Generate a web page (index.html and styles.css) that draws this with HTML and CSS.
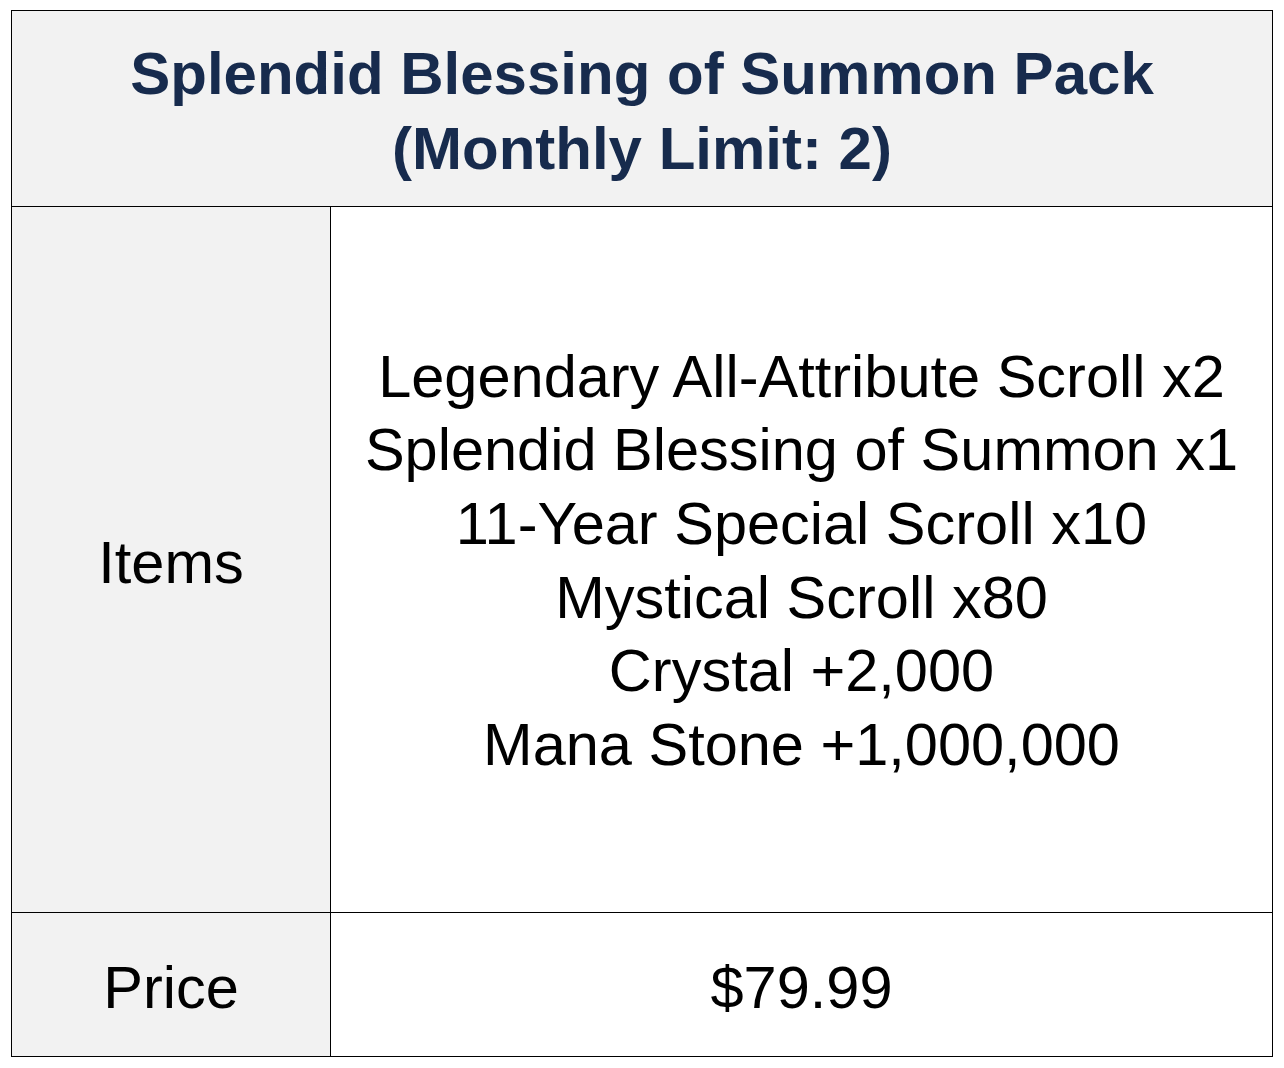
FILE: index.html
```html
<!DOCTYPE html>
<html>
<head>
<meta charset="utf-8">
<link rel="stylesheet" href="styles.css">
</head>
<body>
<div class="pack">
  <div class="pack-title">Splendid Blessing of Summon Pack<br>(Monthly Limit: 2)</div>
  <div class="row row-items">
    <div class="label">Items</div>
    <div class="value items-list">
      <div>Legendary All-Attribute Scroll x2</div>
      <div>Splendid Blessing of Summon x1</div>
      <div>11-Year Special Scroll x10</div>
      <div>Mystical Scroll x80</div>
      <div>Crystal +2,000</div>
      <div>Mana Stone +1,000,000</div>
    </div>
  </div>
  <div class="row row-price">
    <div class="label">Price</div>
    <div class="value">$79.99</div>
  </div>
</div>
</body>
</html>
```
FILE: styles.css
```css
html, body {
  margin: 0;
  padding: 0;
  background: #ffffff;
}
body {
  font-family: "Liberation Sans", Arial, sans-serif;
}
.pack {
  margin: 10px 0 0 11px;
  width: 1262px;
  box-sizing: border-box;
  border: 1px solid #000;
  display: flex;
  flex-direction: column;
}
.pack-title {
  height: 196px;
  box-sizing: border-box;
  padding-top: 4px;
  background: #f2f2f2;
  border-bottom: 1px solid #000;
  display: flex;
  align-items: center;
  justify-content: center;
  text-align: center;
  font-weight: bold;
  font-size: 60px;
  line-height: 75px;
  color: #172b4d;
}
.row {
  display: grid;
  grid-template-columns: 319px 1fr;
}
.row-items {
  height: 706px;
  border-bottom: 1px solid #000;
  box-sizing: border-box;
}
.row-price {
  height: 143px;
}
.label {
  background: #f2f2f2;
  border-right: 1px solid #000;
  display: flex;
  align-items: center;
  justify-content: center;
  font-size: 59.5px;
  color: #000;
  padding-top: 6px;
}
.value {
  display: flex;
  flex-direction: column;
  align-items: center;
  justify-content: center;
  font-size: 59.5px;
  color: #000;
  text-align: center;
  padding-top: 6px;
}
.items-list {
  line-height: 73.6px;
  padding-top: 2px;
}
```
